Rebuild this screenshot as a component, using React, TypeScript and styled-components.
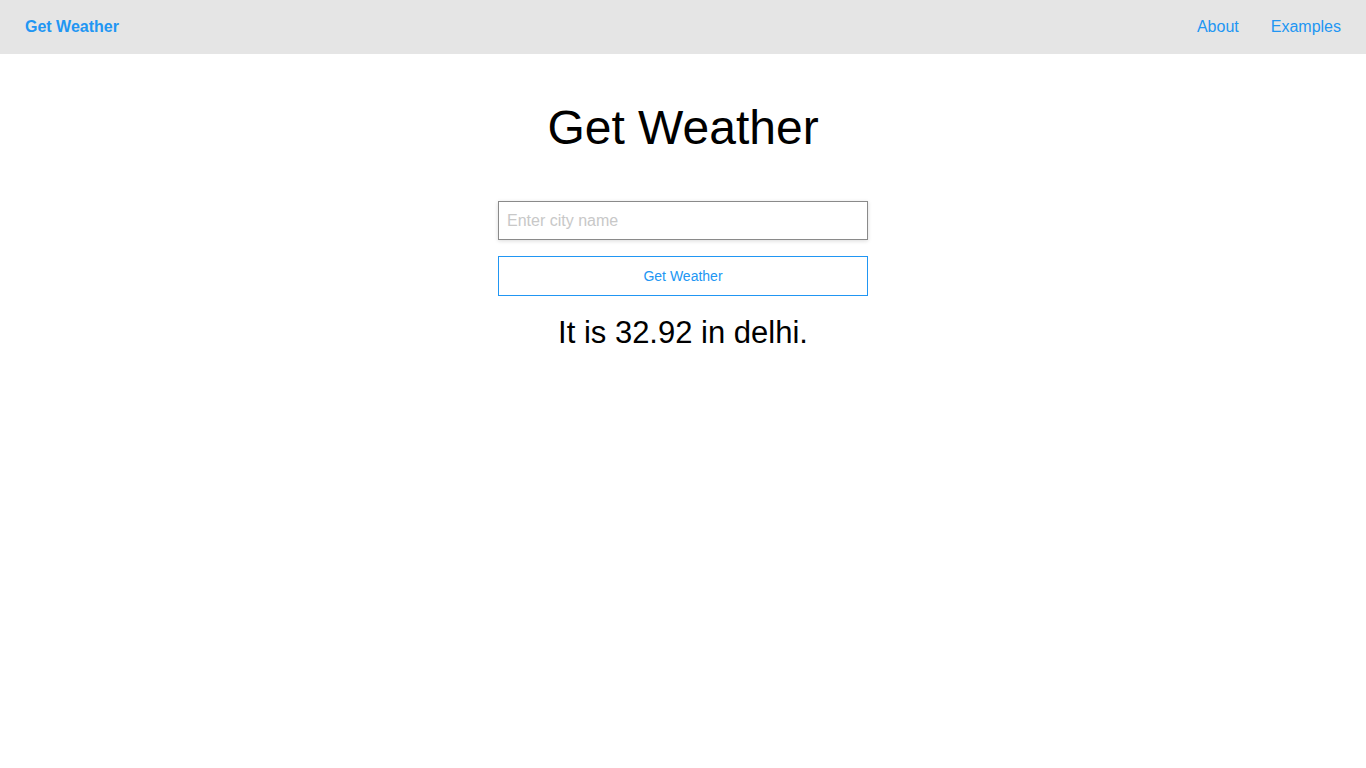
import React, { useState } from "react";
import styled, { createGlobalStyle } from "styled-components";

const Global = createGlobalStyle`
  html, body { margin: 0; padding: 0; background: #fff; }
  body { font-family: "Liberation Sans", Arial, sans-serif; }
  * { box-sizing: border-box; }
`;

const NavBar = styled.nav`
  height: 54px;
  background: #e5e5e5;
  display: flex;
  align-items: center;
  justify-content: space-between;
  padding: 0 25px 0 25px;
`;

const Brand = styled.a`
  color: #2196f3;
  font-weight: bold;
  font-size: 16px;
  text-decoration: none;
`;

const NavLinks = styled.div`
  display: flex;
  gap: 32px;
`;

const NavLink = styled.a`
  color: #2196f3;
  font-size: 16px;
  text-decoration: none;
`;

const Main = styled.main`
  display: flex;
  flex-direction: column;
  align-items: center;
`;

const Title = styled.h1`
  font-size: 48px;
  font-weight: normal;
  color: #000;
  margin: 46px 0 46px;
  line-height: 55px;
`;

const Form = styled.form`
  width: 370px;
  display: flex;
  flex-direction: column;
  gap: 16px;
`;

const CityInput = styled.input`
  width: 100%;
  height: 39px;
  border: 1px solid #8a8a8a;
  box-shadow: 0 1px 4px rgba(0, 0, 0, 0.15);
  padding: 0 8px;
  font-size: 16px;
  font-family: "Liberation Sans", Arial, sans-serif;
  outline: none;
  &::placeholder { color: #c8c8c8; }
`;

const Button = styled.button`
  width: 100%;
  height: 40px;
  border: 1px solid #2196f3;
  background: #fff;
  color: #2196f3;
  font-size: 14px;
  font-family: "Liberation Sans", Arial, sans-serif;
  cursor: pointer;
`;

const Result = styled.p`
  font-size: 31px;
  line-height: 36px;
  color: #000;
  margin: 19px 0 0;
`;

export default function App() {
  const [city, setCity] = useState("");
  return (
    <>
      <Global />
      <NavBar>
        <Brand href="#">Get Weather</Brand>
        <NavLinks>
          <NavLink href="#">About</NavLink>
          <NavLink href="#">Examples</NavLink>
        </NavLinks>
      </NavBar>
      <Main>
        <Title>Get Weather</Title>
        <Form onSubmit={(e) => e.preventDefault()}>
          <CityInput
            placeholder="Enter city name"
            value={city}
            onChange={(e) => setCity(e.target.value)}
          />
          <Button type="submit">Get Weather</Button>
        </Form>
        <Result>It is 32.92 in delhi.</Result>
      </Main>
    </>
  );
}
